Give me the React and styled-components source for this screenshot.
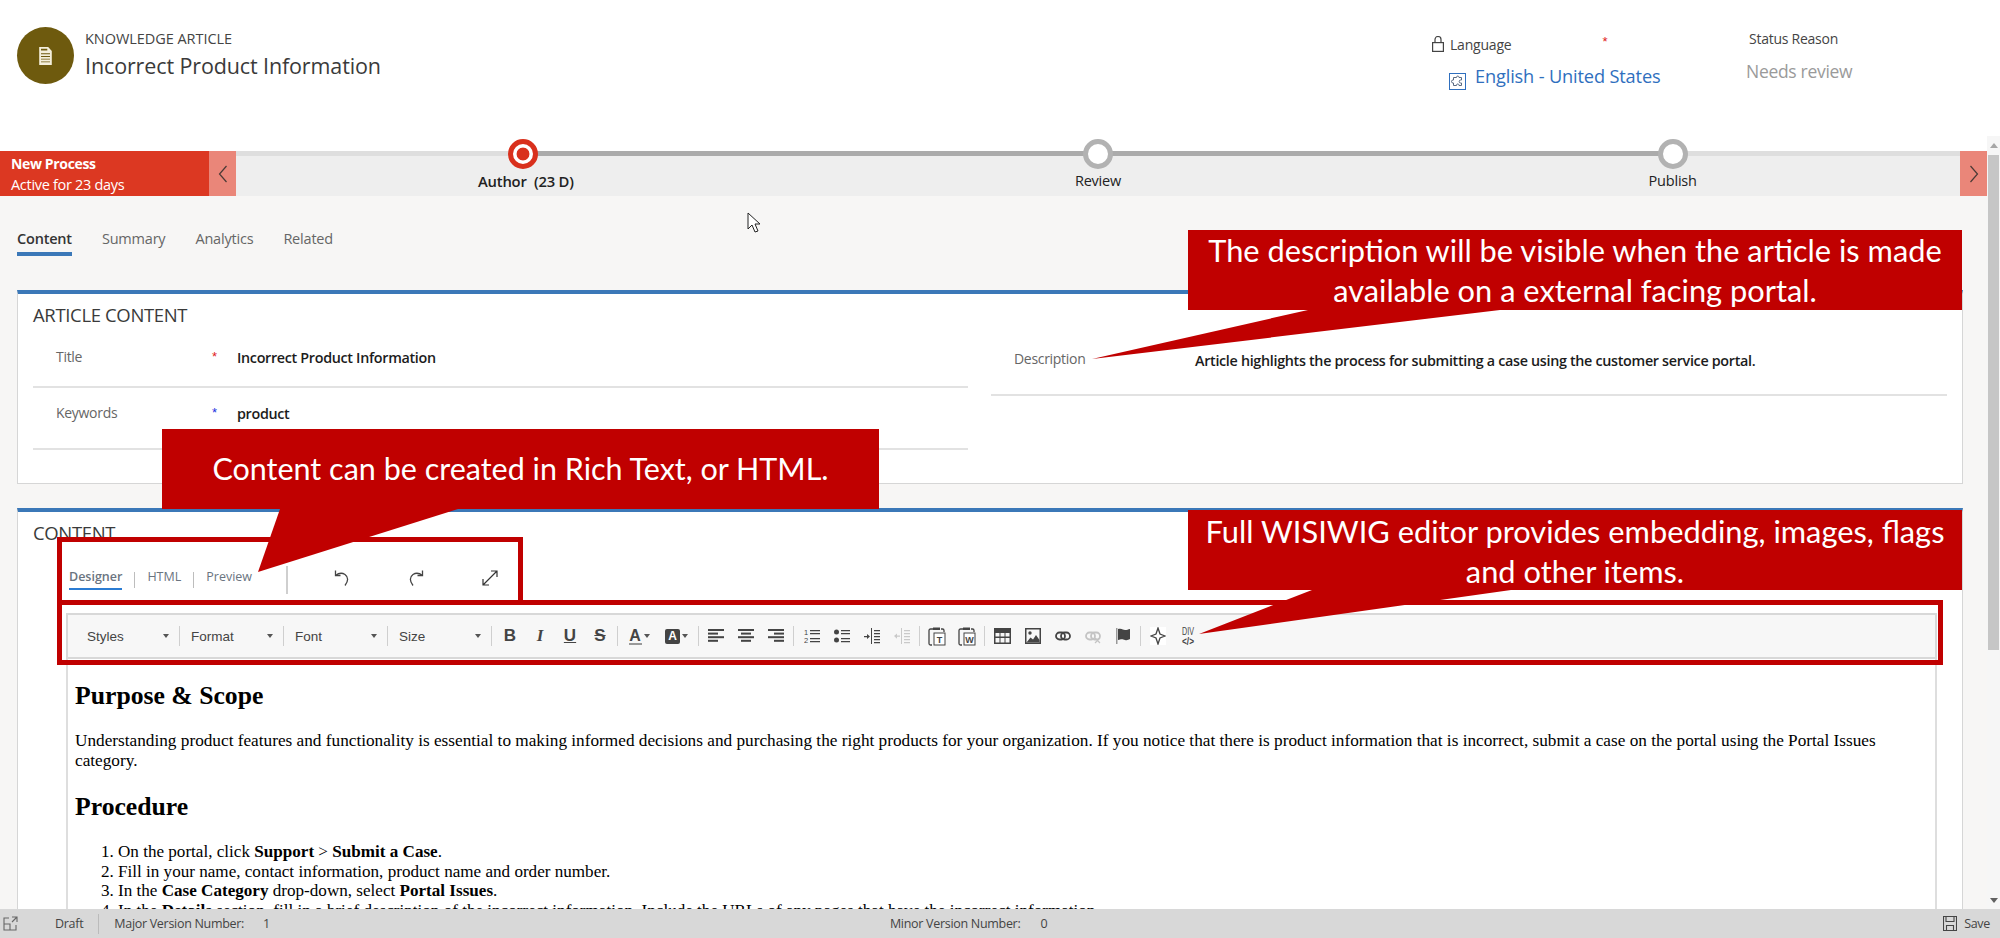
import React from 'react';
import styled, { createGlobalStyle } from 'styled-components';

const GlobalStyle = createGlobalStyle`
    html, body {
        margin: 0;
        padding: 0;
        height: 100%;
        overflow: hidden;
        background: #fff;
        font-family: 'Open Sans', 'Noto Sans', sans-serif;
    }
    * {
        box-sizing: border-box;
    }
`;

const App_ = styled.div`
    position: relative;
    width: 2000px;
    height: 938px;
    overflow: hidden;
    display: flex;
    flex-direction: column;
    background: #fff;
`;

// ---------------------------------------------------------------- header
const Header = styled.header`
    height: 136px;
    flex: none;
    display: flex;
    background: #fff;
`;
const EntityBlock = styled.div`
    display: flex;
    gap: 11px;
    padding: 27px 0 0 17px;
`;
const EntityIcon = styled.div`
    width: 57px;
    height: 57px;
    border-radius: 50%;
    background: #6e5a0e;
    display: flex;
    align-items: center;
    justify-content: center;
`;
const EntityType = styled.div`
    font-size: 14.5px;
    line-height: 24px;
    color: #444;
    letter-spacing: -0.05px;
`;
const EntityName = styled.div`
    margin-top: 1px;
    font-size: 21.5px;
    line-height: 28px;
    color: #3a3a3a;
    letter-spacing: -0.12px;
`;
const HeaderRight = styled.div`
    margin-left: auto;
    width: 568px;
    display: flex;
`;
const LanguageField = styled.div`
    width: 317px;
    padding-top: 34px;
`;
const LanguageLabel = styled.div`
    display: flex;
    align-items: center;
    gap: 6px;
    height: 20px;
    font-size: 14px;
    color: #444;
    letter-spacing: -0.2px;
`;
const RequiredMark = styled.span`
    color: ${(p) => p.$color || '#e02020'};
    font-size: 13px;
    line-height: 13px;
    font-family: 'Liberation Sans', sans-serif;
`;
const LanguageStar = styled(RequiredMark)`
    margin-left: 85px;
    margin-top: -6px;
`;
const LanguageValue = styled.div`
    display: flex;
    align-items: flex-start;
    gap: 9px;
    margin: 10px 0 0 17px;
    font-size: 18.2px;
    line-height: 24px;
    color: #2f6fbe;
    letter-spacing: -0.15px;
`;
const LookupBox = styled.span`
    display: flex;
    margin-top: 9px;
`;
const StatusField = styled.div`
    padding-top: 29px;
`;
const StatusLabel = styled.div`
    font-size: 14px;
    line-height: 20px;
    color: #444;
    letter-spacing: -0.25px;
`;
const StatusValue = styled.div`
    margin: 9px 0 0 -3px;
    font-size: 17.5px;
    line-height: 26px;
    color: #9a9a9a;
    letter-spacing: -0.3px;
`;

// ---------------------------------------------------------------- process bar
const ScrollArea = styled.div`
    flex: 1;
    min-height: 0;
    display: flex;
    background: #f7f6f5;
`;
const PageColumn = styled.div`
    flex: 1;
    min-width: 0;
    overflow: hidden;
`;
const ProcessBar = styled.div`
    display: flex;
    height: 60px;
    padding-top: 15px;
    background: linear-gradient(#fff 15px, #eeeeee 15px);
`;
const ProcessName = styled.div`
    width: 209px;
    padding: 1px 0 0 11px;
    background: #dc3822;
    color: #fff;
`;
const ProcessTitle = styled.div`
    font-size: 14px;
    line-height: 23px;
    font-weight: 700;
    letter-spacing: -0.35px;
`;
const ProcessActive = styled.div`
    font-size: 14.5px;
    line-height: 19px;
    letter-spacing: -0.3px;
`;
const ProcessArrow = styled.div`
    width: ${(p) => p.$w}px;
    flex: none;
    background: #ea8679;
    display: flex;
    align-items: center;
    justify-content: center;
`;
const StageTrack = styled.div`
    flex: 1;
    display: grid;
    grid-template-columns: repeat(3, 1fr);
`;
const Stage = styled.div`
    display: flex;
    flex-direction: column;
    align-items: center;
    background-image: linear-gradient(
        to right,
        ${(p) => (p.$first ? '#dedede' : '#ababab')} 50%,
        ${(p) => (p.$last ? '#dedede' : '#ababab')} 50%
    );
    background-size: 100% 5px;
    background-repeat: no-repeat;
`;
const StageDot = styled.div`
    width: 30px;
    height: 30px;
    margin-top: -12px;
    border-radius: 50%;
    background: ${(p) => (p.$active ? 'radial-gradient(circle, #d9301c 6px, #fff 6.8px)' : '#fff')};
    border: 5px solid ${(p) => (p.$active ? '#d9301c' : '#b2b2b2')};
`;
const StageLabel = styled.div`
    margin: 2px 0 0 ${(p) => (p.$active ? 5 : 0)}px;
    font-size: ${(p) => (p.$active ? 14.8 : 14.5)}px;
    line-height: 20px;
    color: #222;
    white-space: pre;
    font-weight: ${(p) => (p.$active ? 600 : 400)};
    letter-spacing: -0.2px;
`;

// ---------------------------------------------------------------- form
const FormBody = styled.div`
    padding: 0 24px 0 17px;
`;
const Tabs = styled.div`
    display: flex;
    gap: 30px;
    padding-top: 30px;
    margin-bottom: 34px;
`;
const Tab = styled.div`
    height: 30px;
    line-height: 26px;
    font-size: 14.5px;
    letter-spacing: -0.2px;
    color: ${(p) => (p.$active ? '#333' : '#666')};
    font-weight: ${(p) => (p.$active ? 600 : 400)};
    border-bottom: 4px solid ${(p) => (p.$active ? '#3b78b8' : 'transparent')};
`;
const Section = styled.section`
    background: #fff;
    border: 1px solid #d6d6d6;
    border-top: 4px solid #3b78b8;
    padding: 8px 15px 33px;
    margin-bottom: 24px;
`;
const SectionTitle = styled.div`
    font-size: 18.5px;
    line-height: 26px;
    color: #3a3a3a;
    letter-spacing: -0.35px;
`;
const FieldColumns = styled.div`
    display: grid;
    grid-template-columns: 935px 1fr;
    gap: 23px;
`;
const FieldRow = styled.div`
    display: grid;
    grid-template-columns: ${(p) => p.$cols};
    align-items: center;
    height: ${(p) => p.$h}px;
    padding: 0 0 ${(p) => p.$pb}px 23px;
    border-bottom: 2px solid #e2e2e2;
`;
const FieldLabel = styled.div`
    font-size: 14px;
    color: #666;
    letter-spacing: -0.3px;
`;
const FieldValue = styled.div`
    font-size: 14.35px;
    font-weight: 600;
    color: #1c1c1c;
    letter-spacing: -0.32px;
    padding-top: 3px;
`;

// ---------------------------------------------------------------- editor
const EditorTabs = styled.div`
    display: flex;
    align-items: center;
    height: 28px;
    margin: 20px 0 19px 36px;
`;
const EditorTab = styled.div`
    font-size: 12.5px;
    line-height: 20px;
    height: 23px;
    margin-top: -4px;
    color: #6a7480;
    font-weight: ${(p) => (p.$active ? 600 : 400)};
    border-bottom: ${(p) => (p.$active ? '2px solid #2b7cd3' : 'none')};
`;
const TabDivider = styled.div`
    width: 1px;
    height: 16px;
    margin: 0 12px;
    background: #bdbdbd;
`;
const TallDivider = styled.div`
    width: 2px;
    height: 28px;
    margin: 0 42px 0 34px;
    background: #cfcfcf;
`;
const HistoryButton = styled.div`
    width: 24px;
    height: 24px;
    margin: -4px 50px 0 0;
    display: flex;
    align-items: center;
    justify-content: center;
`;
const EditorFrame = styled.div`
    margin: 0 10px 0 33px;
`;
const Toolbar = styled.div`
    height: 46px;
    display: flex;
    align-items: center;
    padding-left: 8px;
    background: #f7f7f7;
    border: 2px solid #d8d8d8;
    font-family: 'Liberation Sans', Arial, sans-serif;
    color: #444;
`;
const SelectBox = styled.div`
    width: 103px;
    flex: none;
    display: flex;
    align-items: center;
    justify-content: space-between;
    padding: 0 10px 0 11px;
    font-size: 13.5px;
`;
const Caret = styled.span`
    width: 0;
    height: 0;
    border-left: 3.5px solid transparent;
    border-right: 3.5px solid transparent;
    border-top: 4px solid ${(p) => p.$color || '#555'};
`;
const ToolSep = styled.div`
    width: 1px;
    height: 20px;
    flex: none;
    background: #cfcfcf;
    margin: ${(p) => (p.$tight ? '0' : '0 2.5px 0 2px')};
`;
const ToolButton = styled.div`
    width: ${(p) => p.$w || 30}px;
    flex: none;
    display: flex;
    align-items: center;
    justify-content: center;
    gap: 2px;
    margin-left: ${(p) => p.$ml || 0}px;
`;
const Glyph = styled.span`
    font-size: 17px;
    line-height: 18px;
    font-weight: 700;
    font-style: ${(p) => (p.$italic ? 'italic' : 'normal')};
    text-decoration: ${(p) => p.$decoration || 'none'};
    font-family: ${(p) => (p.$serif ? "'Liberation Serif', serif" : 'inherit')};
    color: #444;
`;
const ColorGlyph = styled(Glyph)`
    border-bottom: 2px solid #999;
    line-height: 15px;
    width: 13px;
    text-align: center;
    font-size: 16px;
`;
const BoxGlyph = styled.span`
    width: 15px;
    height: 15px;
    border-radius: 2px;
    background: #444;
    color: #fff;
    font-size: 12px;
    font-weight: 700;
    line-height: 15px;
    text-align: center;
`;
const EditorBody = styled.div`
    background: #fff;
    border-left: 2px solid #dedede;
    border-right: 2px solid #dedede;
    padding: 23px 7px 0;
    font-family: 'Liberation Serif', 'Times New Roman', serif;
    color: #000;
    height: 300px;
`;
const ArticleHeading = styled.h2`
    margin: 0 0 21px;
    font-size: 25.7px;
    line-height: 28px;
    font-weight: 700;
`;
const ArticleText = styled.p`
    margin: 0 0 22px;
    font-size: 17.24px;
    line-height: 20px;
`;
const ArticleList = styled.ol`
    margin: 21px 0 0;
    padding-left: 43px;
    font-size: 17.1px;
    line-height: 19.5px;
`;

// ---------------------------------------------------------------- scrollbar + footer
const ScrollBar = styled.div`
    width: 13px;
    flex: none;
    display: flex;
    flex-direction: column;
    align-items: center;
    background: #f6f6f6;
    padding-top: 7px;
`;
const ScrollThumb = styled.div`
    width: 11px;
    height: 495px;
    margin-top: 7px;
    background: #c6c6c6;
`;
const ScrollUp = styled.span`
    border-left: 4px solid transparent;
    border-right: 4px solid transparent;
    border-bottom: 5px solid #a6a6a6;
`;
const ScrollDown = styled.span`
    margin-top: auto;
    margin-bottom: 6px;
    border-left: 4px solid transparent;
    border-right: 4px solid transparent;
    border-top: 5px solid #606060;
`;
const Footer = styled.footer`
    height: 29px;
    flex: none;
    display: flex;
    align-items: center;
    background: #d8d8d8;
    font-size: 12.5px;
    color: #444;
    letter-spacing: -0.3px;
    padding: 0 10px 0 3px;
`;
const FooterDraft = styled.div`
    margin-left: 37px;
    padding-right: 15px;
    border-right: 1px solid #bbb;
    line-height: 20px;
`;
const FooterItem = styled.div`
    margin-left: ${(p) => p.$ml}px;
`;
const SaveButton = styled.div`
    margin-left: auto;
    display: flex;
    align-items: center;
    gap: 7px;
`;

// ---------------------------------------------------------------- annotations laid over the page
const Callout = styled.div`
    position: absolute;
    left: ${(p) => p.$x}px;
    top: ${(p) => p.$y}px;
    width: ${(p) => p.$w}px;
    height: 80px;
    padding-top: ${(p) => p.$pt}px;
    background: #c00000;
    color: #fff;
    font-family: Lato, 'Open Sans', sans-serif;
    font-size: ${(p) => p.$fs || 30.8}px;
    line-height: 39.5px;
    text-align: center;
`;
const CalloutTail = styled.svg`
    position: absolute;
    left: 0;
    top: 0;
    width: 1px;
    height: 1px;
    overflow: visible;
`;
const Outline = styled.div`
    position: absolute;
    left: ${(p) => p.$x}px;
    top: ${(p) => p.$y}px;
    width: ${(p) => p.$w}px;
    height: ${(p) => p.$h}px;
    border: 5px solid #c00000;
`;
const Cursor = styled.svg`
    position: absolute;
    left: 747px;
    top: 212px;
`;

// ---------------------------------------------------------------- drawings
const DocIcon = () => (
    <svg width="15" height="18" viewBox="0 0 16 20">
        <path d="M1 0h10l4 4.500V20H1z" fill="#f4efdc" />
        <path d="M3 2h7v2H3zM3 7h10v1H3zM3 10h10v1H3zM3 13h10v1H3zM3 16h10v1H3z" fill="#6e5a0e" />
    </svg>
);
const LockIcon = () => (
    <svg width="12" height="16" viewBox="0 0 12 16" fill="none" stroke="#444" strokeWidth="1.200">
        <rect x="0.600" y="6.600" width="10.800" height="8.800" />
        <path d="M3 6.500V3.500a3 3 0 0 1 6 0v3" />
    </svg>
);
const LookupIcon = () => (
    <svg width="17" height="17" viewBox="0 0 17 17" fill="none" stroke="#2f6fbe" strokeWidth="1">
        <rect x="0.500" y="0.500" width="16" height="16" />
        <path d="M6 4.500h1.500V4a1.300 1.300 0 0 1 2.500 0v.5H12.500V7h-.8a1.500 1.500 0 0 0 0 3h.8v2.500H10v-.6a1.300 1.300 0 0 0-2.500 0v.6H4.500V10H4a1.500 1.500 0 0 1 0-3h.5V4.500z" stroke="#5a6a80" />
    </svg>
);
const Chevron = ({ left }) => (
    <svg width="10" height="18" viewBox="0 0 10 18" fill="none" stroke="#4a3a36" strokeWidth="1.200">
        <path d={left ? 'M8.500 1 1.500 9l7 8' : 'M1.500 1l7 8-7 8'} />
    </svg>
);
const UndoIcon = ({ flip }) => (
    <svg width="16" height="18" viewBox="0 0 16 18" fill="none" stroke="#444" strokeWidth="1.300" style={flip ? { transform: 'scaleX(-1)' } : undefined}>
        <path d="M1.500 1.500v5h5" />
        <path d="M1.500 6.500C4 4.500 8 3.500 11 5.500c3.500 2.500 3.500 6.500 0 11" />
    </svg>
);
const ExpandIcon = () => (
    <svg width="16" height="16" viewBox="0 0 16 16" fill="none" stroke="#333" strokeWidth="1.200">
        <path d="M1.500 14.500l13-13M9 1h6v6M1 9v6h6" />
    </svg>
);

const ti = { width: 16, height: 16, viewBox: '0 0 16 16' };
const AlignIcon = ({ mode }) => {
    const rows = [16, 10, 16, 10];
    const off = (w) => (mode === 'center' ? (16 - w) / 2 : mode === 'right' ? 16 - w : 0);
    return (
        <svg {...ti} fill="#444">
            {rows.map((w, i) => (
                <rect key={i} x={off(w)} y={1 + i * 3.6} width={w} height="2" />
            ))}
        </svg>
    );
};
const NumberIcon = () => (
    <svg {...ti} fill="#444">
        <text x="0" y="7" fontSize="7.500" fontFamily="Liberation Sans">1</text>
        <text x="0" y="15" fontSize="7.500" fontFamily="Liberation Sans">2</text>
        <path d="M6 2h10v1.300H6zM6 5h10v1.300H6zM6 10h10v1.300H6zM6 13h10v1.300H6z" />
    </svg>
);
const BulletIcon = () => (
    <svg {...ti} fill="#444">
        <circle cx="2.500" cy="4" r="2.500" />
        <circle cx="2.500" cy="12" r="2.500" />
        <path d="M7 2h9v1.300H7zM7 5h9v1.300H7zM7 10h9v1.300H7zM7 13h9v1.300H7z" />
    </svg>
);
const IndentIcon = ({ muted, out }) => (
    <svg {...ti} fill={muted ? '#c9c9c9' : '#444'}>
        <path d="M7 0h1v16H7zM10 2h6v1.200h-6zM10 5h6v1.200h-6zM10 8h6v1.200h-6zM10 11h6v1.200h-6zM10 14h6v1.200h-6z" />
        <path d={out ? 'M0 8l3-2.500v2h3v1.200H3v2z' : 'M6 8.500L3 6v2H0v1.200h3v1.800z'} />
    </svg>
);
const PasteIcon = ({ letter }) => (
    <svg width="18" height="20" viewBox="0 0 18 20">
        <path d="M5 3H2.500A1.500 1.500 0 0 0 1 4.500v13A1.500 1.500 0 0 0 2.500 19H4" fill="none" stroke="#444" strokeWidth="1.300" />
        <path d="M5 1.500h7V4H5z" fill="#444" />
        <path d="M13 3h1.500A1.500 1.500 0 0 1 16 4.500V6" fill="none" stroke="#444" strokeWidth="1.300" />
        <rect x="6" y="7" width="11" height="12" fill="#fff" stroke="#444" />
        <text x="11.500" y="16.500" fontSize="9" fontWeight="700" textAnchor="middle" fontFamily="Liberation Sans" fill="#444">{letter}</text>
    </svg>
);
const TableIcon = () => (
    <svg width="17" height="16" viewBox="0 0 17 16" fill="#444">
        <path fillRule="evenodd" d="M0 0h17v16H0zM1.500 5v3.500h4V5zM6.500 5v3.500h4V5zM11.500 5v3.500h4V5zM1.500 10v4.500h4V10zM6.500 10v4.500h4V10zM11.500 10v4.500h4V10z" />
    </svg>
);
const ImageIcon = () => (
    <svg {...ti} fill="#444">
        <path fillRule="evenodd" d="M0 0h16v16H0zM1.500 1.500v13h13v-13z" />
        <circle cx="5" cy="5" r="1.700" />
        <path d="M1.500 14.500l4-5 2.500 2 3-4.500 3.500 5v2.500z" />
    </svg>
);
const LinkIcon = ({ muted }) => (
    <svg {...ti} fill="none" stroke={muted ? '#c4c4c4' : '#444'} strokeWidth="1.800">
        <rect x="1" y="4.500" width="9" height="7" rx="3.500" />
        <rect x="6" y="4.500" width="9" height="7" rx="3.500" />
        {muted && <path d="M10 10l5 5M15 10l-5 5" strokeWidth="1.200" />}
    </svg>
);
const FlagIcon = () => (
    <svg {...ti} fill="#444">
        <path d="M1 0h1.500v16H1z" fill="#999" />
        <path d="M3 1c4-1 5 1 7 1s3-.5 5-1v10c-2 1-3 1.500-5 1s-3-1.500-7 0z" />
    </svg>
);
const SparkIcon = () => (
    <svg width="16" height="18" viewBox="0 0 16 18" fill="#fff" stroke="#444" strokeWidth="1.300" style={{ background: '#fff' }}>
        <path d="M8 1l2 6 5 2-5 2-2 6-2-6-5-2 5-2z" />
    </svg>
);
const DivIcon = () => (
    <svg width="16" height="20" viewBox="0 0 16 20" fill="#444" fontFamily="Liberation Sans" textAnchor="middle">
        <text x="8" y="9" fontSize="11" textLength="12" lengthAdjust="spacingAndGlyphs">DIV</text>
        <text x="8" y="18.500" fontSize="10" fontWeight="700" textLength="12" lengthAdjust="spacingAndGlyphs">{'</>'}</text>
    </svg>
);

const selects = ['Styles', 'Format', 'Font', 'Size'];

const RichToolbar = () => (
    <Toolbar>
        {selects.map((s) => (
            <React.Fragment key={s}>
                <SelectBox>
                    {s}
                    <Caret />
                </SelectBox>
                <ToolSep $tight />
            </React.Fragment>
        ))}
        <ToolButton $ml={3}><Glyph>B</Glyph></ToolButton>
        <ToolButton><Glyph $italic $serif>I</Glyph></ToolButton>
        <ToolButton><Glyph $decoration="underline">U</Glyph></ToolButton>
        <ToolButton><Glyph $decoration="line-through">S</Glyph></ToolButton>
        <ToolSep />
        <ToolButton $w={37}><ColorGlyph>A</ColorGlyph><Caret /></ToolButton>
        <ToolButton $w={38}><BoxGlyph>A</BoxGlyph><Caret /></ToolButton>
        <ToolSep />
        <ToolButton><AlignIcon mode="left" /></ToolButton>
        <ToolButton><AlignIcon mode="center" /></ToolButton>
        <ToolButton><AlignIcon mode="right" /></ToolButton>
        <ToolSep />
        <ToolButton><NumberIcon /></ToolButton>
        <ToolButton><BulletIcon /></ToolButton>
        <ToolButton><IndentIcon /></ToolButton>
        <ToolButton><IndentIcon muted out /></ToolButton>
        <ToolSep />
        <ToolButton><PasteIcon letter="T" /></ToolButton>
        <ToolButton><PasteIcon letter="W" /></ToolButton>
        <ToolSep />
        <ToolButton><TableIcon /></ToolButton>
        <ToolButton><ImageIcon /></ToolButton>
        <ToolButton><LinkIcon /></ToolButton>
        <ToolButton><LinkIcon muted /></ToolButton>
        <ToolButton><FlagIcon /></ToolButton>
        <ToolSep />
        <ToolButton><SparkIcon /></ToolButton>
        <ToolButton><DivIcon /></ToolButton>
    </Toolbar>
);

const App = () => (
    <App_>
        <GlobalStyle />
        <Header>
            <EntityBlock>
                <EntityIcon><DocIcon /></EntityIcon>
                <div>
                    <EntityType>KNOWLEDGE ARTICLE</EntityType>
                    <EntityName>Incorrect Product Information</EntityName>
                </div>
            </EntityBlock>
            <HeaderRight>
                <LanguageField>
                    <LanguageLabel>
                        <LockIcon />
                        Language
                        <LanguageStar>*</LanguageStar>
                    </LanguageLabel>
                    <LanguageValue>
                        <LookupBox><LookupIcon /></LookupBox>
                        English - United States
                    </LanguageValue>
                </LanguageField>
                <StatusField>
                    <StatusLabel>Status Reason</StatusLabel>
                    <StatusValue>Needs review</StatusValue>
                </StatusField>
            </HeaderRight>
        </Header>

        <ScrollArea>
            <PageColumn>
                <ProcessBar>
                    <ProcessName>
                        <ProcessTitle>New Process</ProcessTitle>
                        <ProcessActive>Active for 23 days</ProcessActive>
                    </ProcessName>
                    <ProcessArrow $w={27}><Chevron left /></ProcessArrow>
                    <StageTrack>
                        <Stage $first>
                            <StageDot $active />
                            <StageLabel $active>Author  (23 D)</StageLabel>
                        </Stage>
                        <Stage>
                            <StageDot />
                            <StageLabel>Review</StageLabel>
                        </Stage>
                        <Stage $last>
                            <StageDot />
                            <StageLabel>Publish</StageLabel>
                        </Stage>
                    </StageTrack>
                    <ProcessArrow $w={27}><Chevron /></ProcessArrow>
                </ProcessBar>

                <FormBody>
                    <Tabs>
                        <Tab $active>Content</Tab>
                        <Tab>Summary</Tab>
                        <Tab>Analytics</Tab>
                        <Tab>Related</Tab>
                    </Tabs>

                    <Section>
                        <SectionTitle>ARTICLE CONTENT</SectionTitle>
                        <FieldColumns>
                            <div>
                                <FieldRow $cols="156px 25px 1fr" $h={60} $pb={2}>
                                    <FieldLabel>Title</FieldLabel>
                                    <RequiredMark>*</RequiredMark>
                                    <FieldValue>Incorrect Product Information</FieldValue>
                                </FieldRow>
                                <FieldRow $cols="156px 25px 1fr" $h={62} $pb={12}>
                                    <FieldLabel>Keywords</FieldLabel>
                                    <RequiredMark $color="#2030e0">*</RequiredMark>
                                    <FieldValue>product</FieldValue>
                                </FieldRow>
                            </div>
                            <div>
                                <FieldRow $cols="181px 1fr" $h={68} $pb={5}>
                                    <FieldLabel>Description</FieldLabel>
                                    <FieldValue>Article highlights the process for submitting a case using the customer service portal.</FieldValue>
                                </FieldRow>
                            </div>
                        </FieldColumns>
                    </Section>

                    <Section>
                        <SectionTitle>CONTENT</SectionTitle>
                        <EditorTabs>
                            <EditorTab $active>Designer</EditorTab>
                            <TabDivider />
                            <EditorTab>HTML</EditorTab>
                            <TabDivider />
                            <EditorTab>Preview</EditorTab>
                            <TallDivider />
                            <HistoryButton><UndoIcon /></HistoryButton>
                            <HistoryButton><UndoIcon flip /></HistoryButton>
                            <HistoryButton><ExpandIcon /></HistoryButton>
                        </EditorTabs>
                        <EditorFrame>
                            <RichToolbar />
                            <EditorBody>
                                <ArticleHeading>Purpose &amp; Scope</ArticleHeading>
                                <ArticleText>
                                    Understanding product features and functionality is essential to making informed decisions and purchasing the right products for your organization. If you notice that there is product information that is incorrect, submit a case on the portal using the Portal Issues category.
                                </ArticleText>
                                <ArticleHeading>Procedure</ArticleHeading>
                                <ArticleList>
                                    <li>On the portal, click <b>Support</b> &gt; <b>Submit a Case</b>.</li>
                                    <li>Fill in your name, contact information, product name and order number.</li>
                                    <li>In the <b>Case Category</b> drop-down, select <b>Portal Issues</b>.</li>
                                    <li>In the <b>Details</b> section, fill in a brief description of the incorrect information. Include the URLs of any pages that have the incorrect information.</li>
                                </ArticleList>
                            </EditorBody>
                        </EditorFrame>
                    </Section>
                </FormBody>
            </PageColumn>
            <ScrollBar>
                <ScrollUp />
                <ScrollThumb />
                <ScrollDown />
            </ScrollBar>
        </ScrollArea>

        <Footer>
            <svg width="15" height="15" viewBox="0 0 15 15" fill="none" stroke="#666" strokeWidth="1.100">
                <path d="M6 2H1v12h12V9M1 8h6v6M9 1h5v5M14 1L9 6" />
            </svg>
            <FooterDraft>Draft</FooterDraft>
            <FooterItem $ml={15}>Major Version Number:</FooterItem>
            <FooterItem $ml={19}>1</FooterItem>
            <FooterItem $ml={620}>Minor Version Number:</FooterItem>
            <FooterItem $ml={20}>0</FooterItem>
            <SaveButton>
                <svg width="14" height="15" viewBox="0 0 14 15" fill="none" stroke="#444" strokeWidth="1.100">
                    <path d="M.5.500h13v14H.5zM3 .5v5h8v-5M3.500 14.500v-5h7v5" />
                </svg>
                Save
            </SaveButton>
        </Footer>

        <Outline $x={57} $y={537} $w={466} $h={68} />
        <Outline $x={57} $y={600} $w={1886} $h={65} />

        <Callout $x={1188} $y={230} $w={774} $pt={1}>
            The description will be visible when the article is made available on a external facing portal.
            <CalloutTail><polygon points="120,80 -96,129 312,80" fill="#c00000" /></CalloutTail>
        </Callout>
        <Callout $x={162} $y={429} $w={717} $pt={20} $fs={30.5}>
            Content can be created in Rich Text, or HTML.
            <CalloutTail><polygon points="118,80 96,143 296,80" fill="#c00000" /></CalloutTail>
        </Callout>
        <Callout $x={1188} $y={510} $w={774} $pt={2}>
            Full WISIWIG editor provides embedding, images, flags and other items.
            <CalloutTail><polygon points="124,80 11,124 323,80" fill="#c00000" /></CalloutTail>
        </Callout>

        <Cursor width="14" height="21" viewBox="0 0 14 21">
            <path d="M1 1v16l4-4 3 7 3-1-3-7h5z" fill="#fff" stroke="#222" strokeWidth="1" />
        </Cursor>
    </App_>
);

export default App;
